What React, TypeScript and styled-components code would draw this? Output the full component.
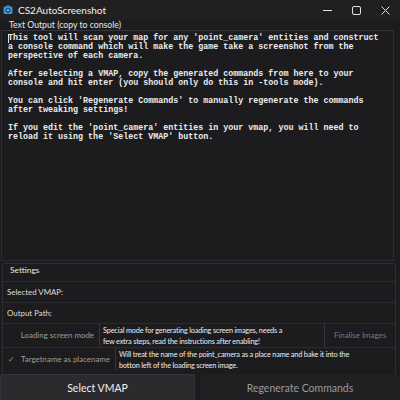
import styled, { createGlobalStyle } from 'styled-components';

const GlobalStyle = createGlobalStyle`
  html, body {
    margin: 0;
    padding: 0;
    background: #1c1c1f;
  }
`;

const ui = `Lato, "Open Sans", "Liberation Sans", sans-serif`;

const Window = styled.div`
  width: 400px;
  height: 400px;
  background: #1c1c1f;
  display: flex;
  flex-direction: column;
  font-family: ${ui};
  color: #e4e4e4;
  overflow: hidden;
`;

const TitleBar = styled.div`
  height: 20px;
  flex: none;
  background: #202020;
  display: flex;
  align-items: center;
  padding-left: 3px;
`;

const Title = styled.span`
  font-size: 10px;
  margin-left: 5px;
  color: #f0f0f0;
  flex: 1;
`;

const Controls = styled.div`
  display: flex;
  height: 100%;
`;

const ControlButton = styled.div`
  width: 29px;
  height: 100%;
  display: flex;
  align-items: center;
  justify-content: center;
`;

const Body = styled.div`
  flex: 1;
  display: flex;
  flex-direction: column;
  min-height: 0;
`;

const GroupLabel = styled.div`
  height: 10px;
  line-height: 10px;
  font-size: 8.7px;
  padding-left: 9px;
  color: #e8e8e8;
`;

const OutputBox = styled.div`
  height: 231px;
  margin: 0 6px 0 1px;
  border: 1px solid #2c2c30;
  border-top-color: #34343a;
  background: #1c1c1f;
  padding: 3px 6px;
  box-sizing: border-box;
  font-family: "Liberation Mono", "Courier New", monospace;
  font-size: 8.35px;
  line-height: 9px;
  white-space: pre;
  color: #ececec;
  font-weight: bold;
`;

const Caret = styled.span`
  display: inline-block;
  width: 1px;
  height: 9px;
  background: #e0e0e0;
  vertical-align: top;
  margin-right: -1px;
`;

const Settings = styled.div`
  margin: 2px 4px 0 2px;
  border: 1px solid #2e2e33;
  border-bottom: none;
  border-radius: 3px 3px 0 0;
  padding: 0 0 3px 0;
  display: flex;
  flex-direction: column;
`;

const SettingsLabel = styled.div`
  font-size: 8.4px;
  height: 17px;
  line-height: 12px;
  padding-left: 7px;
`;

const FieldRow = styled.div`
  height: 21px;
  box-sizing: border-box;
  border-top: 1px solid #2a2a2f;
  display: flex;
  align-items: center;
  padding-left: 4px;
  font-size: 7.9px;
  color: #dcdcdc;
`;

const OptionRow = styled.div`
  height: 24px;
  box-sizing: border-box;
  border-top: 1px solid #2a2a2f;
  display: flex;
  align-items: center;
  font-size: 7.9px;
  line-height: 11px;
`;

const Check = styled.span`
  width: 14px;
  padding-left: 5px;
  color: #9a9a9a;
  font-size: 8px;
  flex: none;
  box-sizing: border-box;
`;

const OptionName = styled.div<{ $width: number }>`
  width: ${({ $width }) => $width}px;
  flex: none;
  color: #9c9c9c;
  text-align: right;
  padding-right: 5px;
  border-right: 1px solid #34343a;
  height: 100%;
  display: flex;
  align-items: center;
  justify-content: flex-end;
  box-sizing: border-box;
  white-space: nowrap;
`;

const OptionText = styled.div`
  flex: 1;
  padding-left: 3px;
  color: #ededed;
  white-space: pre;
  font-size: 7.3px;
  letter-spacing: -0.17px;
`;

const SideButton = styled.div`
  width: 70px;
  flex: none;
  height: 100%;
  border-left: 1px solid #34343a;
  color: #7a7a7a;
  display: flex;
  align-items: center;
  justify-content: center;
`;

const ButtonBar = styled.div`
  height: 26px;
  flex: none;
  display: grid;
  grid-template-columns: 195px 1fr;
  gap: 5px;
`;

const BigButton = styled.div<{ $primary?: boolean }>`
  background: ${({ $primary }) => ($primary ? '#2b2b2e' : '#202023')};
  border-radius: 3px 3px 0 0;
  border: 1px solid ${({ $primary }) => ($primary ? '#36363a' : '#202023')};
  border-bottom: none;
  color: ${({ $primary }) => ($primary ? '#f0f0f0' : '#9a9a9a')};
  font-size: 10.5px;
  display: flex;
  align-items: center;
  justify-content: center;
`;

const outputText = `This tool will scan your map for any 'point_camera' entities and construct
a console command which will make the game take a screenshot from the
perspective of each camera.

After selecting a VMAP, copy the generated commands from here to your
console and hit enter (you should only do this in -tools mode).

You can click 'Regenerate Commands' to manually regenerate the commands
after tweaking settings!

If you edit the 'point_camera' entities in your vmap, you will need to
reload it using the 'Select VMAP' button.`;

function AppIcon() {
  return (
    <svg width="10" height="10" viewBox="0 0 10 10">
      <rect x="0.5" y="1.5" width="9" height="7.5" rx="1.6" fill="#3b8fd9" />
      <rect x="3" y="0.5" width="4" height="2" rx="0.6" fill="#3b8fd9" />
      <circle cx="5" cy="5.3" r="2.4" fill="#1a3b5c" />
      <circle cx="5" cy="5.3" r="1.3" fill="#6fb6f0" />
    </svg>
  );
}

export default function App() {
  return (
    <>
      <GlobalStyle />
      <Window>
        <TitleBar>
          <AppIcon />
          <Title>CS2AutoScreenshot</Title>
          <Controls>
            <ControlButton>
              <svg width="9" height="9" viewBox="0 0 9 9">
                <line x1="0" y1="4.5" x2="9" y2="4.5" stroke="#e0e0e0" strokeWidth="1" />
              </svg>
            </ControlButton>
            <ControlButton>
              <svg width="9" height="9" viewBox="0 0 9 9">
                <rect x="0.5" y="0.5" width="8" height="8" rx="1.5" fill="none" stroke="#e0e0e0" strokeWidth="1" />
              </svg>
            </ControlButton>
            <ControlButton>
              <svg width="9" height="9" viewBox="0 0 9 9">
                <path d="M0.5 0.5 L8.5 8.5 M8.5 0.5 L0.5 8.5" stroke="#e0e0e0" strokeWidth="1" />
              </svg>
            </ControlButton>
          </Controls>
        </TitleBar>
        <Body>
          <GroupLabel>Text Output (copy to console)</GroupLabel>
          <OutputBox>
            <Caret />
            {outputText}
          </OutputBox>
          <Settings>
            <SettingsLabel>Settings</SettingsLabel>
            <FieldRow>Selected VMAP:</FieldRow>
            <FieldRow>Output Path:</FieldRow>
            <OptionRow>
              <OptionName $width={97}>Loading screen mode</OptionName>
              <OptionText>{`Special mode for generating loading screen images, needs a
few extra steps, read the instructions after enabling!`}</OptionText>
              <SideButton>Finalise Images</SideButton>
            </OptionRow>
            <OptionRow>
              <Check>✓</Check>
              <OptionName $width={99}>Targetname as placename</OptionName>
              <OptionText>{`Will treat the name of the point_camera as a place name and bake it into the
botton left of the loading screen image.`}</OptionText>
            </OptionRow>
          </Settings>
          <ButtonBar>
            <BigButton $primary>Select VMAP</BigButton>
            <BigButton>Regenerate Commands</BigButton>
          </ButtonBar>
        </Body>
      </Window>
    </>
  );
}
